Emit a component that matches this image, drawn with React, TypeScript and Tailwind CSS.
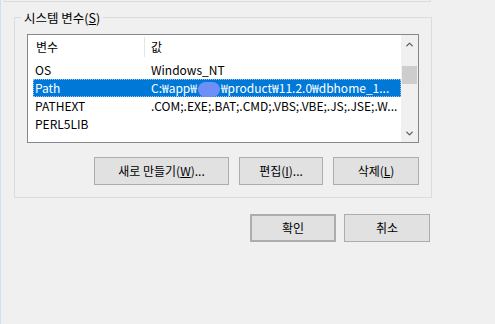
import { ChevronUp, ChevronDown } from "lucide-react";

const font = "font-['Noto_Sans_CJK_KR','Noto_Sans',sans-serif]";

const rows = [
  { name: "OS", value: "Windows_NT" },
  { name: "Path", value: "path", selected: true },
  { name: "PATHEXT", value: ".COM;.EXE;.BAT;.CMD;.VBS;.VBE;.JS;.JSE;.W..." },
  { name: "PERL5LIB", value: "" },
];

const Btn = ({ children, className = "" }: { children: React.ReactNode; className?: string }) => (
  <div
    className={`flex h-[28px] items-center justify-center border border-[#adadad] bg-[#e1e1e1] text-[12px] text-black ${className}`}
  >
    {children}
  </div>
);

export default function App() {
  return (
    <div className={`relative h-[324px] w-[495px] overflow-hidden border-l border-[#cfe0f0] bg-[#f0f0f0] text-[12px] leading-none text-black ${font}`}>
      {/* bottom of the group box above */}
      <div className="ml-[3px] h-[2px] w-[427px] border-x border-b border-[#dcdcdc]" />

      {/* 시스템 변수 */}
      <div className="relative ml-[13px] mt-[15px] h-[181px] w-[418px] border border-[#dcdcdc]">
        <div className="absolute -top-[8px] left-[6px] bg-[#f0f0f0] px-[3px] text-[12.5px] leading-[15px]">
          시스템 변수(<span className="underline">S</span>)
        </div>

        <div className="ml-[12px] mt-[16px] flex h-[109px] w-[392px] border border-[#828790] bg-white">
          <div className="flex-1 overflow-hidden">
            <div className="flex h-[23px] items-center">
              <div className="w-[116px] pl-[8px]">변수</div>
              <div className="h-[20px] w-px bg-[#e5e5e5]" />
              <div className="pl-[6px]">값</div>
            </div>
            <div className="mt-[3px] pl-[5px]">
              {rows.map((r) => (
                <div
                  key={r.name}
                  className={`flex h-[18px] items-center whitespace-nowrap ${
                    r.selected
                      ? "border border-dotted border-[#9cc4ee] bg-[#0078d7] text-white"
                      : "border border-transparent"
                  }`}
                >
                  <div className="w-[110px] pl-[1px]">{r.name}</div>
                  <div className="pl-[7px]">
                    {r.value === "path" ? (
                      <span className="flex items-center">
                        C:₩app₩
                        <span className="mx-[1px] mt-[3px] inline-block h-[15px] w-[22px] rounded-[9px] bg-[#6e8ff5]" />
                        ₩product₩11.2.0₩dbhome_1...
                      </span>
                    ) : (
                      r.value
                    )}
                  </div>
                </div>
              ))}
            </div>
          </div>
          {/* scrollbar */}
          <div className="flex w-[17px] flex-col items-center bg-[#f0f0f0]">
            <ChevronUp className="mt-[4px] h-[11px] w-[11px] text-[#606060]" strokeWidth={3} />
            <div className="mt-[16px] h-[18px] w-[15px] bg-[#cdcdcd]" />
            <div className="flex-1" />
            <ChevronDown className="mb-[3px] h-[11px] w-[11px] text-[#606060]" strokeWidth={3} />
          </div>
        </div>

        <div className="mr-[12px] mt-[14px] flex justify-end gap-[10px]">
          <Btn className="w-[135px]">
            새로 만들기(<span className="underline">W</span>)...
          </Btn>
          <Btn className="w-[84px]">
            편집(<span className="underline">I</span>)...
          </Btn>
          <Btn className="w-[86px]">
            삭제(<span className="underline">L</span>)
          </Btn>
        </div>
      </div>

      <div className="mr-[65px] mt-[16px] flex justify-end gap-[8px]">
        <Btn className="w-[86px] border-2 border-[#0078d7]">확인</Btn>
        <Btn className="w-[86px]">취소</Btn>
      </div>
    </div>
  );
}
